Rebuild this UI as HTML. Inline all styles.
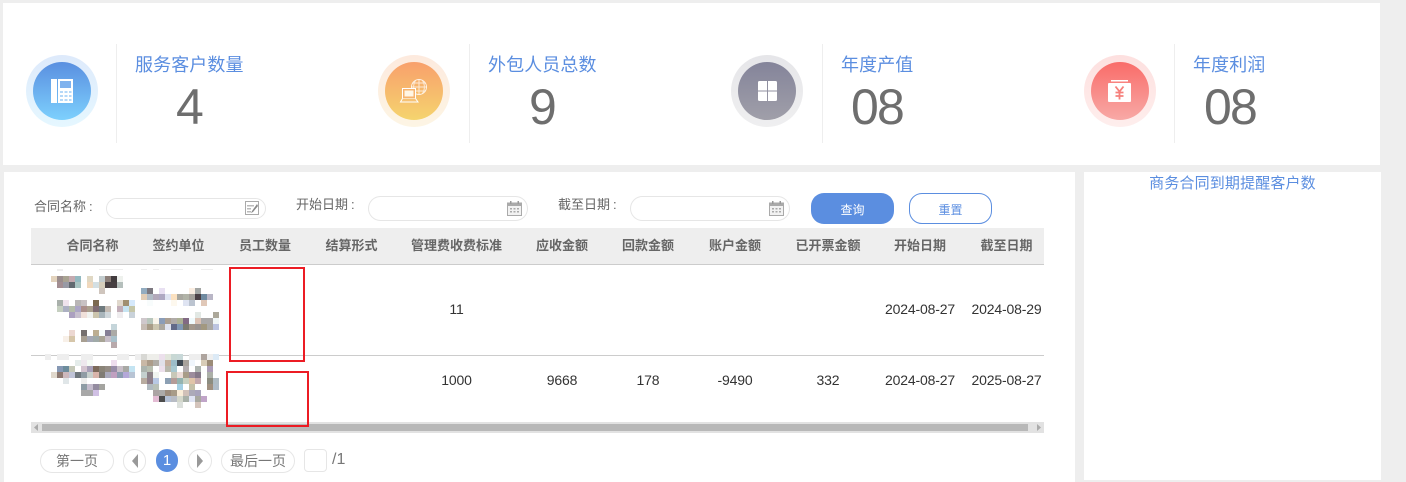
<!DOCTYPE html>
<html lang="zh-CN">
<head>
<meta charset="utf-8">
<title>合同</title>
<style>
html,body{margin:0;padding:0;width:1406px;height:482px;overflow:hidden;background:#eee}
body{position:relative;font-family:"Liberation Sans","Noto Sans CJK SC",sans-serif;color:#666}
.b{position:absolute;background:#fff}
.t{position:absolute;white-space:nowrap}
.c{transform:translateX(-50%)}
.ring{position:absolute;top:55px;width:72px;height:72px;border-radius:50%}
.in{position:absolute;left:7px;top:7px;width:58px;height:58px;border-radius:50%}
.div{position:absolute;top:44px;width:1px;height:99px;background:#eee}
.title{top:53px;font-size:18px;line-height:24px;color:#5b8ee0;letter-spacing:.1px}
.num{top:77px;font-size:50px;line-height:60px;color:#6e6e6e;letter-spacing:-1.800px}
.lab{font-size:13px;line-height:18px;color:#666}
.lab span{margin-left:3px}
.inp{position:absolute;box-sizing:border-box;background:#fff;border:1px solid #e6e6e6;border-radius:13px}
.th{top:237px;font-size:13px;line-height:18px;font-weight:bold;color:#666}
.td{font-size:14px;line-height:18px;color:#333;letter-spacing:-.15px}
.pg{position:absolute;box-sizing:border-box;border:1px solid #e6e6e6;border-radius:12px;background:#fff;top:449px;height:24px;font-size:14px;line-height:22px;color:#777;text-align:center}
svg{position:absolute;overflow:visible}
#m rect{width:6px;height:6px}
</style>
</head>
<body>
<div class="b" style="left:3px;top:3px;width:1377px;height:162px"></div>
<div class="b" style="left:4px;top:172px;width:1071px;height:310px"></div>
<div class="b" style="left:1084px;top:172px;width:297px;height:308px"></div>

<div class="ring" style="left:26px;background:linear-gradient(#deeafb,#e5f7ff)"><div class="in" style="background:linear-gradient(#5a8fe0,#7dd0fd)"></div></div>
<svg style="left:51px;top:79px" width="23" height="24" viewBox="0 0 23 24">
<path fill="#fff" d="M0 0h6v24H0zM7 0h15v24H7z"/>
<path fill="#7fb2ee" d="M9 2h11v7H9z"/>
<g fill="#b5d8f8"><path d="M9 12h3v2H9zM13.500 12h3v2h-3zM18 12h2.500v2H18zM9 16h3v2H9zM13.500 16h3v2h-3zM18 16h2.500v2H18zM9 20h3v2H9zM13.500 20h3v2h-3zM18 20h2.500v2H18z"/></g>
</svg>
<div class="div" style="left:116px"></div>
<div class="t title" style="left:135px">服务客户数量</div>
<div class="t num" style="left:176px">4</div>

<div class="ring" style="left:378px;background:linear-gradient(#fdeade,#fdf5e4)"><div class="in" style="background:linear-gradient(#f8a06c,#f5d46e)"></div></div>
<svg style="left:400px;top:78px" width="28" height="26" viewBox="0 0 28 26" fill="none" stroke="#fff">
<circle cx="19" cy="9" r="7.500" opacity=".8"/>
<path opacity=".7" d="M11.500 9h15M12.500 5h13M12.500 13h13M19 1.500v15M15.500 2.500c-2.500 4-2.500 9 0 13M22.500 2.500c2.500 4 2.500 9 0 13"/>
<rect x="2.500" y="10.500" width="13" height="10" fill="#f7b46e"/>
<rect x="4.500" y="12.500" width="9" height="6" fill="#fff6e4" stroke="none"/>
<path d="M2.500 20.500L.5 24h17.500l-2.500-3.500" fill="#f6c274"/>
</svg>
<div class="div" style="left:469px"></div>
<div class="t title" style="left:488px">外包人员总数</div>
<div class="t num" style="left:529px">9</div>

<div class="ring" style="left:731px;background:linear-gradient(#e6e6e9,#efeff0)"><div class="in" style="background:linear-gradient(#84849a,#a09fa9)"></div></div>
<svg style="left:758px;top:81px" width="19" height="20" viewBox="0 0 19 20">
<path fill="#fff" d="M1.500 0H9v9.500H0V1.500A1.500 1.500 0 0 1 1.500 0zM10 0h7.500A1.500 1.500 0 0 1 19 1.500v8h-9zM0 10.500h9V20H1.500A1.500 1.500 0 0 1 0 18.500zM10 10.500h9v8a1.500 1.500 0 0 1-1.500 1.500H10z"/>
</svg>
<div class="div" style="left:822px"></div>
<div class="t title" style="left:841px">年度产值</div>
<div class="t num" style="left:851px">08</div>

<div class="ring" style="left:1084px;background:linear-gradient(#fde0df,#feeeed)"><div class="in" style="background:linear-gradient(#f96c69,#f8a9a6)"></div></div>
<svg style="left:1108px;top:80px" width="23" height="22" viewBox="0 0 23 22">
<path fill="#fff" d="M3 0h17v1.500H3zM1 3h21a1 1 0 0 1 1 1v17a1 1 0 0 1-1 1H1a1 1 0 0 1-1-1V4a1 1 0 0 1 1-1z"/>
<path fill="none" stroke="#f6807c" stroke-width="1.800" d="M7.500 6.500l4 5 4-5M11.500 11.500v8M7.500 12.500h8M7.500 16h8"/>
</svg>
<div class="div" style="left:1174px"></div>
<div class="t title" style="left:1193px">年度利润</div>
<div class="t num" style="left:1204px">08</div>

<div class="t c" style="left:1232.500px;top:174px;font-size:15px;line-height:20px;color:#5b8ee0;letter-spacing:.15px">商务合同到期提醒客户数</div>

<div class="t lab" style="left:34px;top:198px">合同名称<span>:</span></div>
<div class="inp" style="left:106px;top:198px;width:160px;height:21px;border-radius:11px"></div>
<svg style="left:245px;top:201px" width="14" height="14" viewBox="0 0 14 14">
<path fill="none" stroke="#aaa" d="M.5.5h13v13H.5z"/>
<path fill="#bbb" d="M2 4h7v1.500H2zM2 7h4v1.500H2zM2 10h4v1.500H2z"/>
<path fill="#888" d="M12 3L7 10l-1 2 2-1 5-6z"/>
</svg>
<div class="t lab" style="left:296px;top:196px">开始日期<span>:</span></div>
<div class="inp" style="left:368px;top:196px;width:160px;height:25px"></div>
<svg style="left:507px;top:201px" width="15" height="15" viewBox="0 0 15 15">
<path fill="#aaa" d="M0 1.500h15V15H0z"/><path fill="#f2f2f2" d="M1 5h13v9H1z"/>
<path fill="#999" d="M3 0h1.500v3H3zM10.500 0H12v3h-1.500z"/>
<path fill="#aaa" d="M3 7h2v1.500H3zM6.500 7h2v1.500h-2zM10 7h2v1.500h-2zM3 10h2v1.500H3zM6.500 10h2v1.500h-2zM10 10h2v1.500h-2z"/>
</svg>
<div class="t lab" style="left:558px;top:196px">截至日期<span>:</span></div>
<div class="inp" style="left:630px;top:196px;width:160px;height:25px"></div>
<svg style="left:769px;top:201px" width="15" height="15" viewBox="0 0 15 15">
<path fill="#aaa" d="M0 1.500h15V15H0z"/><path fill="#f2f2f2" d="M1 5h13v9H1z"/>
<path fill="#999" d="M3 0h1.500v3H3zM10.500 0H12v3h-1.500z"/>
<path fill="#aaa" d="M3 7h2v1.500H3zM6.500 7h2v1.500h-2zM10 7h2v1.500h-2zM3 10h2v1.500H3zM6.500 10h2v1.500h-2zM10 10h2v1.500h-2z"/>
</svg>
<div class="t" style="left:811px;top:193px;width:83px;height:31px;border-radius:13px;background:#5b8ee0;color:#fff;font-size:12px;line-height:34px;text-align:center">查询</div>
<div class="t" style="box-sizing:border-box;left:909px;top:193px;width:83px;height:31px;border-radius:13px;background:#fff;border:1px solid #5b8ee0;color:#5b8ee0;font-size:12px;line-height:32px;text-align:center">重置</div>

<div class="b" style="left:31px;top:228px;width:1013px;height:36px;background:#eee"></div>
<div class="b" style="left:31px;top:264px;width:1013px;height:1px;background:#ccc"></div>
<div class="b" style="left:31px;top:355px;width:1013px;height:1px;background:#ccc"></div>

<div class="t th c" style="left:92.500px">合同名称</div>
<div class="t th c" style="left:178.500px">签约单位</div>
<div class="t th c" style="left:265px">员工数量</div>
<div class="t th c" style="left:351.500px">结算形式</div>
<div class="t th c" style="left:456.500px">管理费收费标准</div>
<div class="t th c" style="left:562px">应收金额</div>
<div class="t th c" style="left:648px">回款金额</div>
<div class="t th c" style="left:735px">账户金额</div>
<div class="t th c" style="left:828px">已开票金额</div>
<div class="t th c" style="left:920px">开始日期</div>
<div class="t th c" style="left:1006.500px">截至日期</div>

<svg id="m" style="left:0;top:0" width="1406" height="482" shape-rendering="crispEdges">
<path fill="#eee" d="M57 269h6v2h-6zM99 269h24v1H99zM141 269h6v1h-6zM153 269h6v1h-6zM171 269h12v1h-12zM201 269h12v1h-12z"/>
<g>
<rect x="51" y="276" fill="#e3d3bd"/><rect x="57" y="276" fill="#9a8d8d"/><rect x="63" y="276" fill="#a9a392"/><rect x="69" y="276" fill="#c4aab0"/><rect x="75" y="276" fill="#93b9c0"/><rect x="87" y="276" fill="#e0d8c4"/><rect x="99" y="276" fill="#c3ccce"/><rect x="105" y="276" fill="#8c7f79"/><rect x="111" y="276" fill="#423c3e"/><rect x="117" y="276" fill="#eef1ed"/>
<rect x="57" y="282" fill="#a38e92"/><rect x="63" y="282" fill="#989aa5"/><rect x="69" y="282" fill="#626a70"/><rect x="75" y="282" fill="#a9c4c2"/><rect x="87" y="282" fill="#f0d8bd"/><rect x="93" y="282" fill="#d3dfe3"/><rect x="99" y="282" fill="#d5cdbb"/><rect x="105" y="282" fill="#473f42"/><rect x="111" y="282" fill="#473f42"/><rect x="117" y="282" fill="#b5bfbc"/>
<rect x="99" y="288" fill="#cfc5bd"/>
<rect x="57" y="300" fill="#a9b0ab"/><rect x="63" y="300" fill="#efe3ec"/><rect x="75" y="300" fill="#b9b6b6"/><rect x="81" y="300" fill="#c8c2c4"/><rect x="93" y="300" fill="#7c6a50"/><rect x="117" y="300" fill="#e0d8cc"/><rect x="123" y="300" fill="#a08f70"/><rect x="129" y="300" fill="#d6e9fb"/>
<rect x="57" y="306" fill="#c5cfc0"/><rect x="63" y="306" fill="#acb0c2"/><rect x="69" y="306" fill="#b4bcaa"/><rect x="75" y="306" fill="#aca6c6"/><rect x="81" y="306" fill="#ab8f8b"/><rect x="87" y="306" fill="#aba08e"/><rect x="93" y="306" fill="#7f6c72"/><rect x="99" y="306" fill="#6f7a7e"/><rect x="105" y="306" fill="#c4bab2"/><rect x="117" y="306" fill="#c2aeb8"/><rect x="123" y="306" fill="#c7e4f2"/><rect x="129" y="306" fill="#c5c6a8"/>
<rect x="69" y="312" fill="#aba0c0"/><rect x="75" y="312" fill="#c7c0ce"/><rect x="81" y="312" fill="#f0e0da"/><rect x="87" y="312" fill="#f0f2f0"/><rect x="93" y="312" fill="#cbc4ac"/><rect x="99" y="312" fill="#a8b4ba"/><rect x="105" y="312" fill="#cfd6da"/><rect x="117" y="312" fill="#eeecee"/><rect x="129" y="312" fill="#c9d2da"/>
<rect x="111" y="324" fill="#c5d5da"/>
<rect x="69" y="330" fill="#ecd8d2"/><rect x="81" y="330" fill="#76706f"/><rect x="93" y="330" fill="#bcae92"/><rect x="99" y="330" fill="#f5fbfc"/><rect x="105" y="330" fill="#847f96"/><rect x="111" y="330" fill="#abaaa6"/>
<rect x="63" y="336" fill="#f8f0e8"/><rect x="69" y="336" fill="#d6c6aa"/><rect x="81" y="336" fill="#a89f92"/><rect x="87" y="336" fill="#a5a8b5"/><rect x="93" y="336" fill="#a0aaa8"/><rect x="99" y="336" fill="#a8a496"/><rect x="105" y="336" fill="#c6bec8"/><rect x="111" y="336" fill="#a8c0ca"/>
<rect x="111" y="342" fill="#b8a9ab"/>
</g>
<g>
<rect x="141" y="288" fill="#93acc0"/><rect x="147" y="288" fill="#7c7880"/><rect x="159" y="288" fill="#e8e0f2"/><rect x="189" y="288" fill="#fbeee2"/><rect x="195" y="288" fill="#a3a6a4"/>
<rect x="141" y="294" fill="#e2cdb6"/><rect x="147" y="294" fill="#b2bcc6"/><rect x="153" y="294" fill="#b3a9ba"/><rect x="159" y="294" fill="#aea8c2"/><rect x="165" y="294" fill="#dfe4f2"/><rect x="171" y="294" fill="#fbe1c0"/><rect x="177" y="294" fill="#a9a8a0"/><rect x="183" y="294" fill="#b1b3a7"/><rect x="189" y="294" fill="#a4a09a"/><rect x="195" y="294" fill="#4a3f44"/><rect x="201" y="294" fill="#6f8aa0"/><rect x="207" y="294" fill="#b9b6c6"/>
<rect x="147" y="300" fill="#f8fcfc"/><rect x="171" y="300" fill="#fdf8ee"/><rect x="183" y="300" fill="#dfe4f2"/><rect x="189" y="300" fill="#bcc4d0"/><rect x="201" y="300" fill="#e0c8b8"/>
<rect x="195" y="312" fill="#e2e8e4"/><rect x="213" y="312" fill="#aca89a"/>
<rect x="141" y="318" fill="#cfc8cc"/><rect x="147" y="318" fill="#b8c6bc"/><rect x="153" y="318" fill="#faf5ec"/><rect x="159" y="318" fill="#8b9db8"/><rect x="165" y="318" fill="#ab9f92"/><rect x="171" y="318" fill="#b0aba8"/><rect x="177" y="318" fill="#abb094"/><rect x="183" y="318" fill="#826a84"/><rect x="189" y="318" fill="#f0fafc"/><rect x="195" y="318" fill="#dcc2b4"/><rect x="201" y="318" fill="#aaa8a8"/><rect x="207" y="318" fill="#aaa8a8"/><rect x="213" y="318" fill="#f0f6f6"/>
<rect x="141" y="324" fill="#c6bcb4"/><rect x="147" y="324" fill="#a89c88"/><rect x="153" y="324" fill="#ccc6b0"/><rect x="159" y="324" fill="#aca8a0"/><rect x="165" y="324" fill="#e0e4f0"/><rect x="171" y="324" fill="#626a88"/><rect x="177" y="324" fill="#8098b4"/><rect x="183" y="324" fill="#7c7a70"/><rect x="189" y="324" fill="#a4988c"/><rect x="195" y="324" fill="#9a9490"/><rect x="201" y="324" fill="#a29880"/><rect x="207" y="324" fill="#aaa8a4"/><rect x="213" y="324" fill="#bcc4e0"/>
</g>
<g>
<rect x="45" y="354" fill="#eee"/><rect x="57" y="354" fill="#eee"/><rect x="63" y="354" fill="#eee"/><rect x="81" y="354" fill="#eee"/><rect x="87" y="354" fill="#eee"/><rect x="117" y="354" fill="#eee"/><rect x="123" y="354" fill="#eee"/><rect x="135" y="354" fill="#eee"/><rect x="141" y="354" fill="#d8d8d4"/><rect x="147" y="354" fill="#eeeeea"/><rect x="153" y="354" fill="#eeeeea"/><rect x="159" y="354" fill="#ece0ec"/><rect x="165" y="354" fill="#e2e6dc"/><rect x="171" y="354" fill="#c8d8d4"/><rect x="177" y="354" fill="#c8d8d8"/><rect x="189" y="354" fill="#eee"/><rect x="195" y="354" fill="#eee"/><rect x="201" y="354" fill="#aea49e"/><rect x="207" y="354" fill="#eee"/><rect x="213" y="354" fill="#dceaf6"/>
<rect x="75" y="360" fill="#e4ecea"/><rect x="81" y="360" fill="#eee8ee"/><rect x="87" y="360" fill="#f4faf4"/><rect x="111" y="360" fill="#eeddee"/><rect x="141" y="360" fill="#c9b8a6"/><rect x="147" y="360" fill="#ac9c8a"/><rect x="153" y="360" fill="#b0aca6"/><rect x="159" y="360" fill="#e0e0e8"/><rect x="165" y="360" fill="#c4ae9c"/><rect x="171" y="360" fill="#9cbcc8"/><rect x="177" y="360" fill="#404a54"/><rect x="183" y="360" fill="#a8a29c"/><rect x="189" y="360" fill="#f0f6fc"/><rect x="201" y="360" fill="#d8ccb8"/><rect x="207" y="360" fill="#9c8c78"/>
<rect x="57" y="366" fill="#8698b4"/><rect x="63" y="366" fill="#6c8c9c"/><rect x="69" y="366" fill="#c4c8b8"/><rect x="81" y="366" fill="#d4c4d0"/><rect x="87" y="366" fill="#a8a0b8"/><rect x="93" y="366" fill="#7c6a5a"/><rect x="99" y="366" fill="#8a8478"/><rect x="105" y="366" fill="#948c84"/><rect x="111" y="366" fill="#988ca8"/><rect x="117" y="366" fill="#c8bec8"/><rect x="123" y="366" fill="#a8a8a4"/><rect x="129" y="366" fill="#c4e4f2"/><rect x="141" y="366" fill="#acb4ae"/><rect x="147" y="366" fill="#b8beb0"/><rect x="159" y="366" fill="#ece0ec"/><rect x="165" y="366" fill="#b8b8ac"/><rect x="171" y="366" fill="#a8c8d0"/><rect x="183" y="366" fill="#b4aeb0"/><rect x="195" y="366" fill="#aeb4b0"/><rect x="207" y="366" fill="#aa9cb6"/>
<rect x="51" y="372" fill="#e0d8cc"/><rect x="57" y="372" fill="#8c7870"/><rect x="63" y="372" fill="#ccb8bc"/><rect x="69" y="372" fill="#c0c4d8"/><rect x="75" y="372" fill="#70787e"/><rect x="81" y="372" fill="#909ca4"/><rect x="87" y="372" fill="#c8d0cc"/><rect x="93" y="372" fill="#d8b4aa"/><rect x="99" y="372" fill="#807c74"/><rect x="105" y="372" fill="#aaaabc"/><rect x="111" y="372" fill="#c0a0c0"/><rect x="117" y="372" fill="#8c9cb0"/><rect x="123" y="372" fill="#b4a8d8"/><rect x="129" y="372" fill="#b8c4d4"/><rect x="141" y="372" fill="#c4d0ce"/><rect x="147" y="372" fill="#8c8288"/><rect x="153" y="372" fill="#f0f4f0"/><rect x="171" y="372" fill="#c8c8b8"/><rect x="177" y="372" fill="#ecdcd8"/><rect x="183" y="372" fill="#a89c88"/><rect x="189" y="372" fill="#9c8c9c"/><rect x="195" y="372" fill="#857888"/><rect x="207" y="372" fill="#acb0a8"/>
<rect x="63" y="378" fill="#e0e6e8"/><rect x="81" y="378" fill="#eeeeec"/><rect x="141" y="378" fill="#b8aca0"/><rect x="147" y="378" fill="#90808c"/><rect x="153" y="378" fill="#b8c8e4"/><rect x="165" y="378" fill="#8ca0b4"/><rect x="171" y="378" fill="#b49c98"/><rect x="177" y="378" fill="#94b4b0"/><rect x="183" y="378" fill="#c8d0c0"/><rect x="189" y="378" fill="#e0c4a8"/><rect x="195" y="378" fill="#c4a8ac"/><rect x="207" y="378" fill="#8c8c80"/><rect x="213" y="378" fill="#b0bcc4"/>
<rect x="81" y="384" fill="#8e9ca4"/><rect x="87" y="384" fill="#c4bccc"/><rect x="93" y="384" fill="#948ca0"/><rect x="99" y="384" fill="#a4a4a0"/><rect x="147" y="384" fill="#b0bac0"/><rect x="153" y="384" fill="#b8c0b8"/><rect x="177" y="384" fill="#a4d0e4"/><rect x="189" y="384" fill="#c4c0a8"/><rect x="207" y="384" fill="#a09080"/><rect x="213" y="384" fill="#b0bcc8"/>
<rect x="81" y="390" fill="#a8a8a8"/><rect x="87" y="390" fill="#a8a8a8"/><rect x="93" y="390" fill="#d0c0e4"/><rect x="153" y="390" fill="#aca4a4"/><rect x="159" y="390" fill="#acaaa8"/><rect x="165" y="390" fill="#9c8c7c"/><rect x="171" y="390" fill="#a89c88"/><rect x="177" y="390" fill="#f8ecd8"/><rect x="183" y="390" fill="#d0c0b8"/><rect x="189" y="390" fill="#acaab8"/><rect x="195" y="390" fill="#a8a4bc"/>
<rect x="153" y="396" fill="#e4bcd4"/><rect x="159" y="396" fill="#4c4c4c"/><rect x="165" y="396" fill="#b4c0d4"/><rect x="171" y="396" fill="#b8bcc4"/><rect x="177" y="396" fill="#d4d8cc"/><rect x="183" y="396" fill="#a8b0a8"/><rect x="189" y="396" fill="#e0e4f4"/><rect x="195" y="396" fill="#a8a8a0"/><rect x="201" y="396" fill="#c0a4c8"/>
<rect x="177" y="402" fill="#dce0dc"/><rect x="195" y="402" fill="#d4c4bc"/>
</g>
</svg>

<div class="t td c" style="left:456.500px;top:300px">11</div>
<div class="t td c" style="left:920px;top:300px">2024-08-27</div>
<div class="t td c" style="left:1006.500px;top:300px">2024-08-29</div>
<div class="t td c" style="left:456.500px;top:371px">1000</div>
<div class="t td c" style="left:562px;top:371px">9668</div>
<div class="t td c" style="left:648px;top:371px">178</div>
<div class="t td c" style="left:735px;top:371px">-9490</div>
<div class="t td c" style="left:828px;top:371px">332</div>
<div class="t td c" style="left:920px;top:371px">2024-08-27</div>
<div class="t td c" style="left:1006.500px;top:371px">2025-08-27</div>

<div class="b" style="left:31px;top:422px;width:1013px;height:11px;background:#e2e2e2"></div>
<div class="b" style="left:42px;top:424px;width:986px;height:7px;background:#b8b8b8"></div>
<svg style="left:34px;top:424px" width="5" height="7"><path fill="#aaa" d="M4 0v7L0 3.500z"/></svg>
<svg style="left:1037px;top:424px" width="5" height="7"><path fill="#aaa" d="M0 0v7l4-3.500z"/></svg>

<div class="b" style="box-sizing:border-box;left:229px;top:267px;width:76px;height:95px;background:none;border:2px solid #ec1c24"></div>
<div class="b" style="box-sizing:border-box;left:226px;top:371px;width:83px;height:56px;background:none;border:2px solid #ec1c24"></div>

<div class="pg" style="left:40px;width:74px">第一页</div>
<div class="pg" style="left:123px;width:23px"></div>
<svg style="left:132px;top:454px" width="6" height="14"><path fill="#999" d="M6 0v14L0 7z"/></svg>
<div class="pg" style="left:156px;width:22px;height:23px;background:#5b8ee0;border-color:#5b8ee0;color:#fff;font-size:15px;line-height:21px">1</div>
<div class="pg" style="left:188px;width:24px"></div>
<svg style="left:197px;top:454px" width="6" height="14"><path fill="#999" d="M0 0v14l6-7z"/></svg>
<div class="pg" style="left:221px;width:74px">最后一页</div>
<div class="pg" style="left:304px;width:23px;height:23px;border-radius:4px"></div>
<div class="t" style="left:332px;top:451px;font-size:16px;line-height:18px;color:#777">/1</div>
</body>
</html>
